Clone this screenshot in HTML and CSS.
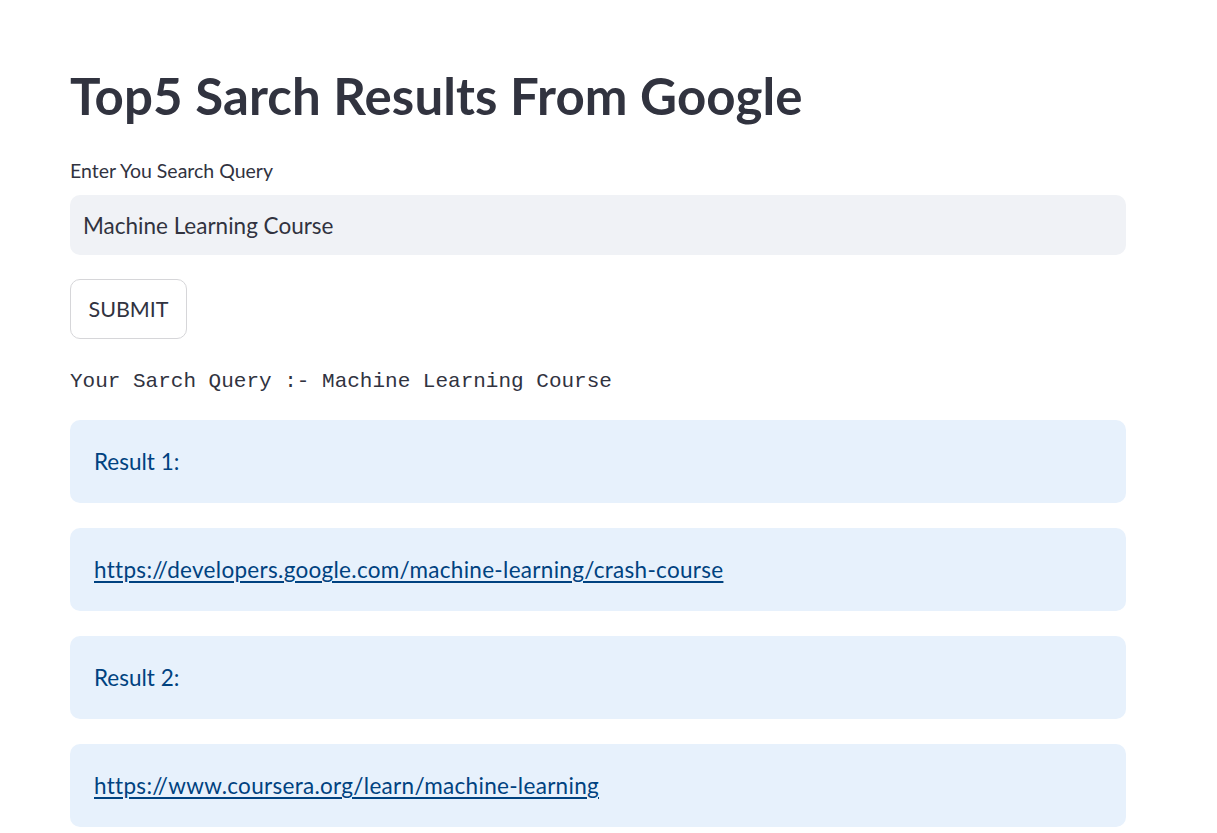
FILE: index.html
```html
<!DOCTYPE html>
<html lang="en">
<head>
<meta charset="utf-8">
<title>Top5 Sarch Results From Google</title>
<link rel="stylesheet" href="styles.css">
</head>
<body>
<main class="app">
  <h1 class="title">Top5 Sarch Results From Google</h1>
  <div class="field">
    <label class="label" for="q">Enter You Search Query</label>
    <input class="input" id="q" type="text" value="Machine Learning Course">
  </div>
  <div class="actions">
    <button class="btn" type="button">SUBMIT</button>
  </div>
  <div class="mono">Your Sarch Query :- Machine Learning Course</div>
  <div class="results">
    <div class="info">Result 1:</div>
    <div class="info"><a href="#">https://developers.google.com/machine-learning/crash-course</a></div>
    <div class="info">Result 2:</div>
    <div class="info"><a href="#">https://www.coursera.org/learn/machine-learning</a></div>
  </div>
</main>
</body>
</html>
```
FILE: styles.css
```css
html, body {
  margin: 0;
  padding: 0;
  background: #ffffff;
}

body {
  font-family: Lato, "Noto Sans", sans-serif;
  color: rgb(49, 51, 63);
}

.app {
  width: 1056px;
  padding: 65px 70px 0 70px;
  display: flex;
  flex-direction: column;
}

.title {
  margin: 0;
  font-size: 51px;
  font-weight: 700;
  line-height: 61px;
  color: rgb(49, 51, 63);
  letter-spacing: 0.1px;
}

.field {
  display: flex;
  flex-direction: column;
  margin-top: 33px;
}

.label {
  font-size: 19.5px;
  line-height: 23px;
  margin-bottom: 13px;
  color: rgb(49, 51, 63);
}

.input {
  box-sizing: border-box;
  height: 60px;
  width: 100%;
  border: none;
  outline: none;
  border-radius: 10px;
  background: rgb(240, 242, 246);
  padding: 0 13px;
  font-family: Lato, "Noto Sans", sans-serif;
  font-size: 22.5px;
  color: rgb(49, 51, 63);
}

.actions {
  margin-top: 24px;
  display: flex;
}

.btn {
  box-sizing: border-box;
  height: 60px;
  width: 117px;
  border: 1px solid rgb(214, 214, 217);
  border-radius: 10px;
  background: #ffffff;
  font-family: Lato, "Noto Sans", sans-serif;
  font-size: 21.5px;
  color: rgb(49, 51, 63);
  padding: 0;
}

.mono {
  margin-top: 29px;
  font-family: "Liberation Mono", "DejaVu Sans Mono", monospace;
  font-size: 21px;
  line-height: 28px;
  color: rgb(49, 51, 63);
  white-space: pre;
}

.results {
  margin-top: 24px;
  display: flex;
  flex-direction: column;
  gap: 25px;
}

.info {
  box-sizing: border-box;
  height: 83px;
  border-radius: 10px;
  background: rgb(231, 241, 252);
  padding: 24px 24px 24px 24px;
  font-size: 22.5px;
  line-height: 35px;
  color: rgb(0, 66, 128);
}

.info a {
  color: rgb(0, 66, 128);
  text-decoration: underline;
  text-underline-offset: 3px;
  letter-spacing: 0.3px;
}
```
